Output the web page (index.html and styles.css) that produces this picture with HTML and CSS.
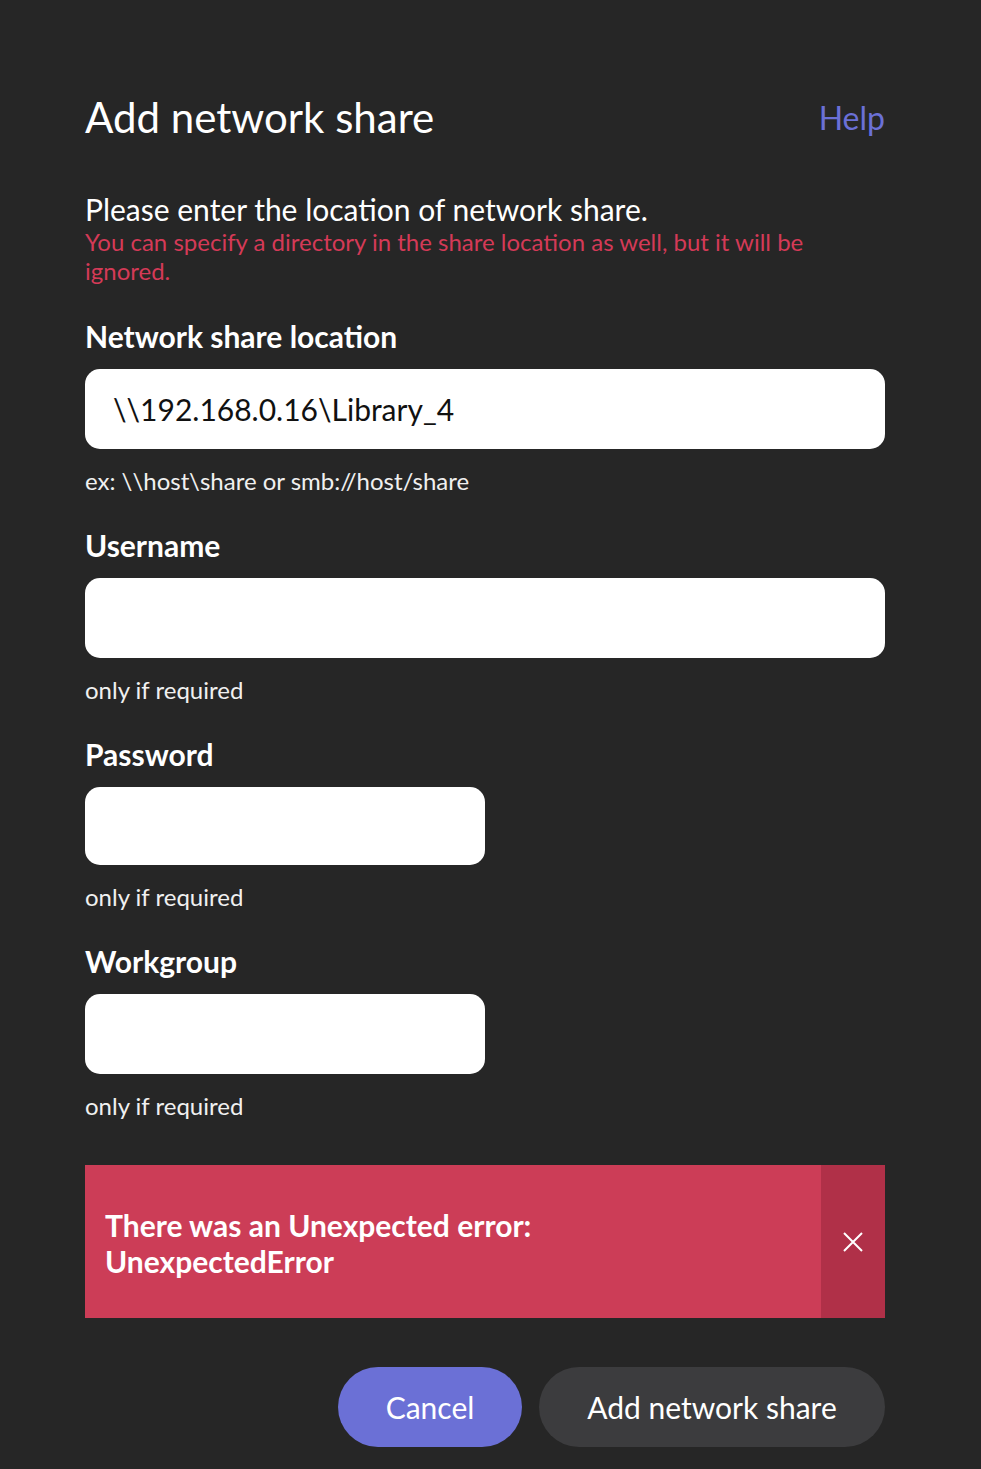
FILE: index.html
```html
<!doctype html>
<html lang="en">
<head>
    <meta charset="utf-8">
    <title>Add network share</title>
    <link rel="stylesheet" href="styles.css">
</head>
<body>
    <div class="dialog">
        <div class="dialog-header">
            <h1 class="dialog-title">Add network share</h1>
            <a class="help-link" href="#">Help</a>
        </div>

        <div class="intro">
            <p class="intro-text">Please enter the location of network share.</p>
            <p class="intro-warning">You can specify a directory in the share location as well, but it will be ignored.</p>
        </div>

        <div class="field">
            <label class="field-label" for="location">Network share location</label>
            <input class="field-input" id="location" type="text" value="\\192.168.0.16\Library_4">
            <div class="field-hint">ex: \\host\share or smb://host/share</div>
        </div>

        <div class="field">
            <label class="field-label" for="username">Username</label>
            <input class="field-input" id="username" type="text">
            <div class="field-hint">only if required</div>
        </div>

        <div class="field">
            <label class="field-label" for="password">Password</label>
            <input class="field-input half short" id="password" type="password">
            <div class="field-hint">only if required</div>
        </div>

        <div class="field">
            <label class="field-label" for="workgroup">Workgroup</label>
            <input class="field-input half" id="workgroup" type="text">
            <div class="field-hint">only if required</div>
        </div>

        <div class="error-banner">
            <div class="error-message">There was an Unexpected error:<br>UnexpectedError</div>
            <button class="error-close" type="button">
                <svg width="20" height="20" viewBox="0 0 20 20">
                    <path d="M1 1 L19 19 M19 1 L1 19" stroke="#fff" stroke-width="2" fill="none"/>
                </svg>
            </button>
        </div>

        <div class="dialog-actions">
            <button class="btn btn-primary" type="button">Cancel</button>
            <button class="btn btn-secondary" type="button">Add network share</button>
        </div>
    </div>
</body>
</html>
```

FILE: styles.css
```css
body {
    margin: 0;
    background: #262626;
    color: #fff;
    font-family: Lato, "Open Sans", sans-serif;
}

.dialog {
    padding: 92px 96px 20px 85px;
}

.dialog-header {
    display: flex;
    justify-content: space-between;
    align-items: baseline;
}

.dialog-title {
    margin: 0;
    font-size: 42px;
    font-weight: 400;
    line-height: 50px;
}

.help-link {
    color: #6b70d6;
    font-size: 32px;
    text-decoration: none;
    position: relative;
    top: -3px;
}

.intro {
    margin-top: 49px;
}

.intro-text {
    margin: 0;
    font-size: 30px;
    line-height: 36px;
}

.intro-warning {
    margin: 0;
    color: #d43a57;
    font-size: 24px;
    line-height: 29px;
    padding-right: 70px;
}

.field {
    margin-top: 33px;
}

.field + .field {
    margin-top: 31px;
}

.field-label {
    display: block;
    font-size: 30px;
    font-weight: 700;
    line-height: 36px;
}

.field-input {
    display: block;
    box-sizing: border-box;
    width: 100%;
    height: 80px;
    margin-top: 15px;
    padding: 0 28px;
    border: 0;
    border-radius: 15px;
    background: #fff;
    color: #111;
    font-family: Lato, sans-serif;
    font-size: 30px;
    outline: 0;
}

.field-input.half {
    width: 400px;
}

.field-input.short {
    height: 78px;
}

.field-hint {
    margin-top: 17px;
    font-size: 24px;
    line-height: 30px;
    color: #f0f0f0;
}

.error-banner {
    display: flex;
    margin-top: 44px;
    min-height: 153px;
    background: #cc3d57;
}

.error-message {
    flex: 1;
    align-self: center;
    padding: 3px 20px 0;
    font-size: 30px;
    font-weight: 700;
    line-height: 36px;
}

.error-close {
    width: 64px;
    border: 0;
    padding: 0;
    background: #b03048;
    display: flex;
    align-items: center;
    justify-content: center;
}

.dialog-actions {
    display: flex;
    justify-content: flex-end;
    gap: 17px;
    margin-top: 49px;
}

.btn {
    height: 80px;
    border: 0;
    border-radius: 40px;
    color: #fff;
    font-family: Lato, sans-serif;
    font-size: 30px;
}

.btn-primary {
    width: 184px;
    background: #6b70d6;
}

.btn-secondary {
    width: 346px;
    background: #3c3c3e;
}
```
